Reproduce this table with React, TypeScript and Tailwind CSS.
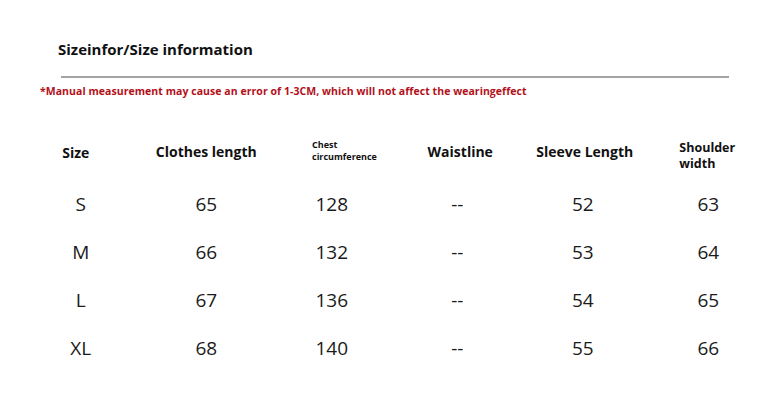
import React from "react";

const rows = [
  ["S", "65", "128", "--", "52", "63"],
  ["M", "66", "132", "--", "53", "64"],
  ["L", "67", "136", "--", "54", "65"],
  ["XL", "68", "140", "--", "55", "66"],
];

const App = () => {
  return (
    <div className="w-[773px] h-[416px] bg-white text-[#111] font-['Open_Sans',sans-serif] overflow-hidden">
      {/* heading */}
      <div className="pt-[39px] pl-[58px] text-[15px] font-bold leading-[20px]">
        Sizeinfor/Size information
      </div>
      <div className="ml-[61px] mt-[17px] w-[668px] h-[2px] bg-[#a3a3a3]" />
      <div className="pl-[40px] mt-[6px] text-[10.5px] font-bold leading-[14px] text-[#b3101a] tracking-[0.05px]">
        *Manual measurement may cause an error of 1-3CM, which will not affect the wearingeffect
      </div>

      {/* table */}
      <div className="ml-[18px] mt-[33px] w-[753px] grid grid-cols-6 text-center">
        <div className="h-[40px] flex items-center justify-center text-[14px] font-bold pr-[10px] pt-[2px]">
          Size
        </div>
        <div className="h-[40px] flex items-center justify-center text-[14px] font-bold">
          Clothes length
        </div>
        <div className="h-[40px] flex flex-col justify-center items-start pl-[43px] text-[9px] font-bold leading-[12px] text-left">
          <span>Chest</span>
          <span>circumference</span>
        </div>
        <div className="h-[40px] flex items-center justify-center text-[14px] font-bold pl-[6px]">
          Waistline
        </div>
        <div className="h-[40px] flex items-center justify-center text-[14px] font-bold pl-[4px]">
          Sleeve Length
        </div>
        <div className="h-[40px] flex items-center justify-center pt-[10px] pr-[2px]">
          <div className="text-left text-[12.5px] font-bold leading-[16px]">
            <div>Shoulder</div>
            <div>width</div>
          </div>
        </div>

        {rows.map((r, i) => (
          <React.Fragment key={i}>
            {r.map((v, j) => (
              <div
                key={j}
                className={
                  "h-[48px] flex items-center justify-center text-[19px] text-[#1a1a1a] " +
                  (i === 0 ? "mt-[9px]" : "")
                }
              >
                {v}
              </div>
            ))}
          </React.Fragment>
        ))}
      </div>
    </div>
  );
};

export default App;
